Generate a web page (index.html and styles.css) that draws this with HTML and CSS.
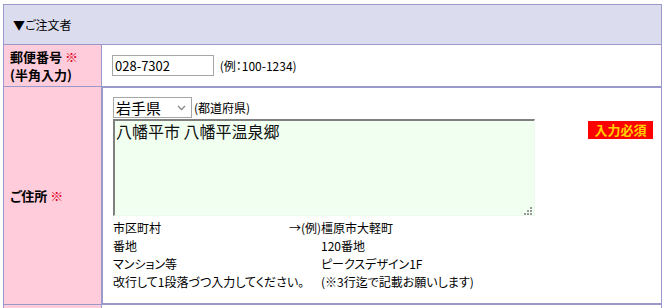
FILE: index.html
```html
<!DOCTYPE html>
<html lang="ja">
<head>
    <meta charset="UTF-8">
    <meta name="viewport" content="width=device-width, initial-scale=1.0">
    <title>ご注文者</title>
    <link rel="stylesheet" href="styles.css">
</head>
<body>
    <form>
        <table class="order">
            <tr>
                <th colspan="2" class="head">▼ご注文者</th>
            </tr>
            <tr>
                <td class="label">郵便番号 <span class="req">※</span><br>(半角入力)</td>
                <td class="field">
                    <input type="text" class="zip" value="028-7302">
                    <span class="note">(例：100-1234)</span>
                </td>
            </tr>
            <tr>
                <td class="label">ご住所 <span class="req">※</span></td>
                <td class="field address">
                    <div class="address-main">
                        <div class="pref-line">
                            <span class="pref-wrap">
                                <select class="pref">
                                    <option>岩手県</option>
                                </select>
                                <svg class="chevron" width="9" height="6" viewBox="0 0 9 6"><path d="M1 1 L4.5 4.5 L8 1" fill="none" stroke="#888" stroke-width="1.3"/></svg>
                            </span>
                            <span class="note">(都道府県)</span>
                        </div>
                        <div class="area-wrap">
                            <textarea class="area">八幡平市 八幡平温泉郷</textarea>
                            <svg class="grip" width="9" height="9" viewBox="0 0 9 9">
                                <rect x="7" y="1" width="2" height="2" fill="#9a9a9a"/>
                                <rect x="4" y="4" width="2" height="2" fill="#9a9a9a"/>
                                <rect x="7" y="4" width="2" height="2" fill="#9a9a9a"/>
                                <rect x="1" y="7" width="2" height="2" fill="#9a9a9a"/>
                                <rect x="4" y="7" width="2" height="2" fill="#9a9a9a"/>
                                <rect x="7" y="7" width="2" height="2" fill="#9a9a9a"/>
                            </svg>
                        </div>
                        <div class="hints">
                            <span>市区町村</span><span>→(例)橿原市大軽町</span>
                            <span>番地</span><span class="indent">120番地</span>
                            <span>マンション等</span><span class="indent">ピークスデザイン1F</span>
                            <span>改行して1段落づつ入力してください。</span><span class="indent">(※3行迄で記載お願いします)</span>
                        </div>
                    </div>
                    <span class="badge">入力必須</span>
                </td>
            </tr>
            <tr class="next">
                <td class="label"></td>
                <td class="field"></td>
            </tr>
        </table>
    </form>
</body>
</html>
```

FILE: styles.css
```css
body {
    margin: 0;
    font-family: "Noto Sans CJK JP", "DejaVu Sans", sans-serif;
    font-size: 12px;
    color: #000;
    background: #fff;
}

.order {
    width: 659px;
    margin: 4px 0 0 3px;
    border-collapse: collapse;
    font-feature-settings: "palt";
}

.order th,
.order td {
    border: 1px solid #9b99c9;
}

.head {
    height: 39px;
    padding: 0 9px;
    background-color: #dcdcef;
    font-weight: normal;
    text-align: left;
    line-height: 16px;
}

.label {
    width: 91px;
    padding: 0 0 0 6px;
    background-color: #ffccdb;
    font-size: 13px;
    font-weight: bold;
    line-height: 18px;
    vertical-align: middle;
}

.req {
    color: #e0001a;
}

.field {
    padding: 10px 8px 10px 10px;
    vertical-align: middle;
}

/* next row only peeks in at the bottom edge */
.next td {
    height: 40px;
}

.zip {
    width: 102px;
    height: 21px;
    box-sizing: border-box;
    margin: 0 3px 0 0;
    padding: 0 2px;
    border: 1px solid #a6a6a6;
    font-family: "Noto Sans CJK JP", sans-serif;
    font-size: 13px;
    vertical-align: middle;
}

.note {
    vertical-align: middle;
}

.address {
    display: flex;
    padding-top: 9px;
    padding-bottom: 12px;
}

.address-main {
    width: 422px;
}

.pref-line {
    display: flex;
    align-items: center;
    height: 21px;
}

.pref-wrap {
    position: relative;
    display: inline-block;
    margin-right: 2px;
}

.pref {
    width: 79px;
    height: 21px;
    padding: 0 0 0 2px;
    border: 1px solid #a6a6a6;
    border-radius: 0;
    background: #fff;
    font-family: "Noto Sans CJK JP", sans-serif;
    font-size: 15px;
    line-height: 19px;
    appearance: none;
    -webkit-appearance: none;
}

.chevron {
    position: absolute;
    right: 6px;
    top: 8px;
    pointer-events: none;
}

.area-wrap {
    position: relative;
    margin-top: 1px;
}

.area {
    display: block;
    width: 422px;
    height: 97px;
    box-sizing: border-box;
    margin: 0;
    padding: 0 1px;
    border-style: solid;
    border-width: 2px 1px 1px 2px;
    border-color: #808080 #eef8ee #eef8ee #808080;
    background-color: #f0fff0;
    font-family: "Noto Sans CJK JP", sans-serif;
    font-size: 16px;
    line-height: 20px;
    color: #111;
    resize: none;
}

.grip {
    position: absolute;
    right: 3px;
    bottom: 1px;
}

.hints {
    display: grid;
    grid-template-columns: 176px auto;
    margin-top: 3px;
    line-height: 18px;
    white-space: nowrap;
}

.indent {
    padding-left: 32px;
}

.badge {
    align-self: flex-start;
    margin: 24px 0 0 auto;
    padding: 0 6px;
    background-color: #ff0000;
    color: #ffd000;
    font-size: 13px;
    font-weight: bold;
    line-height: 18px;
}
```
